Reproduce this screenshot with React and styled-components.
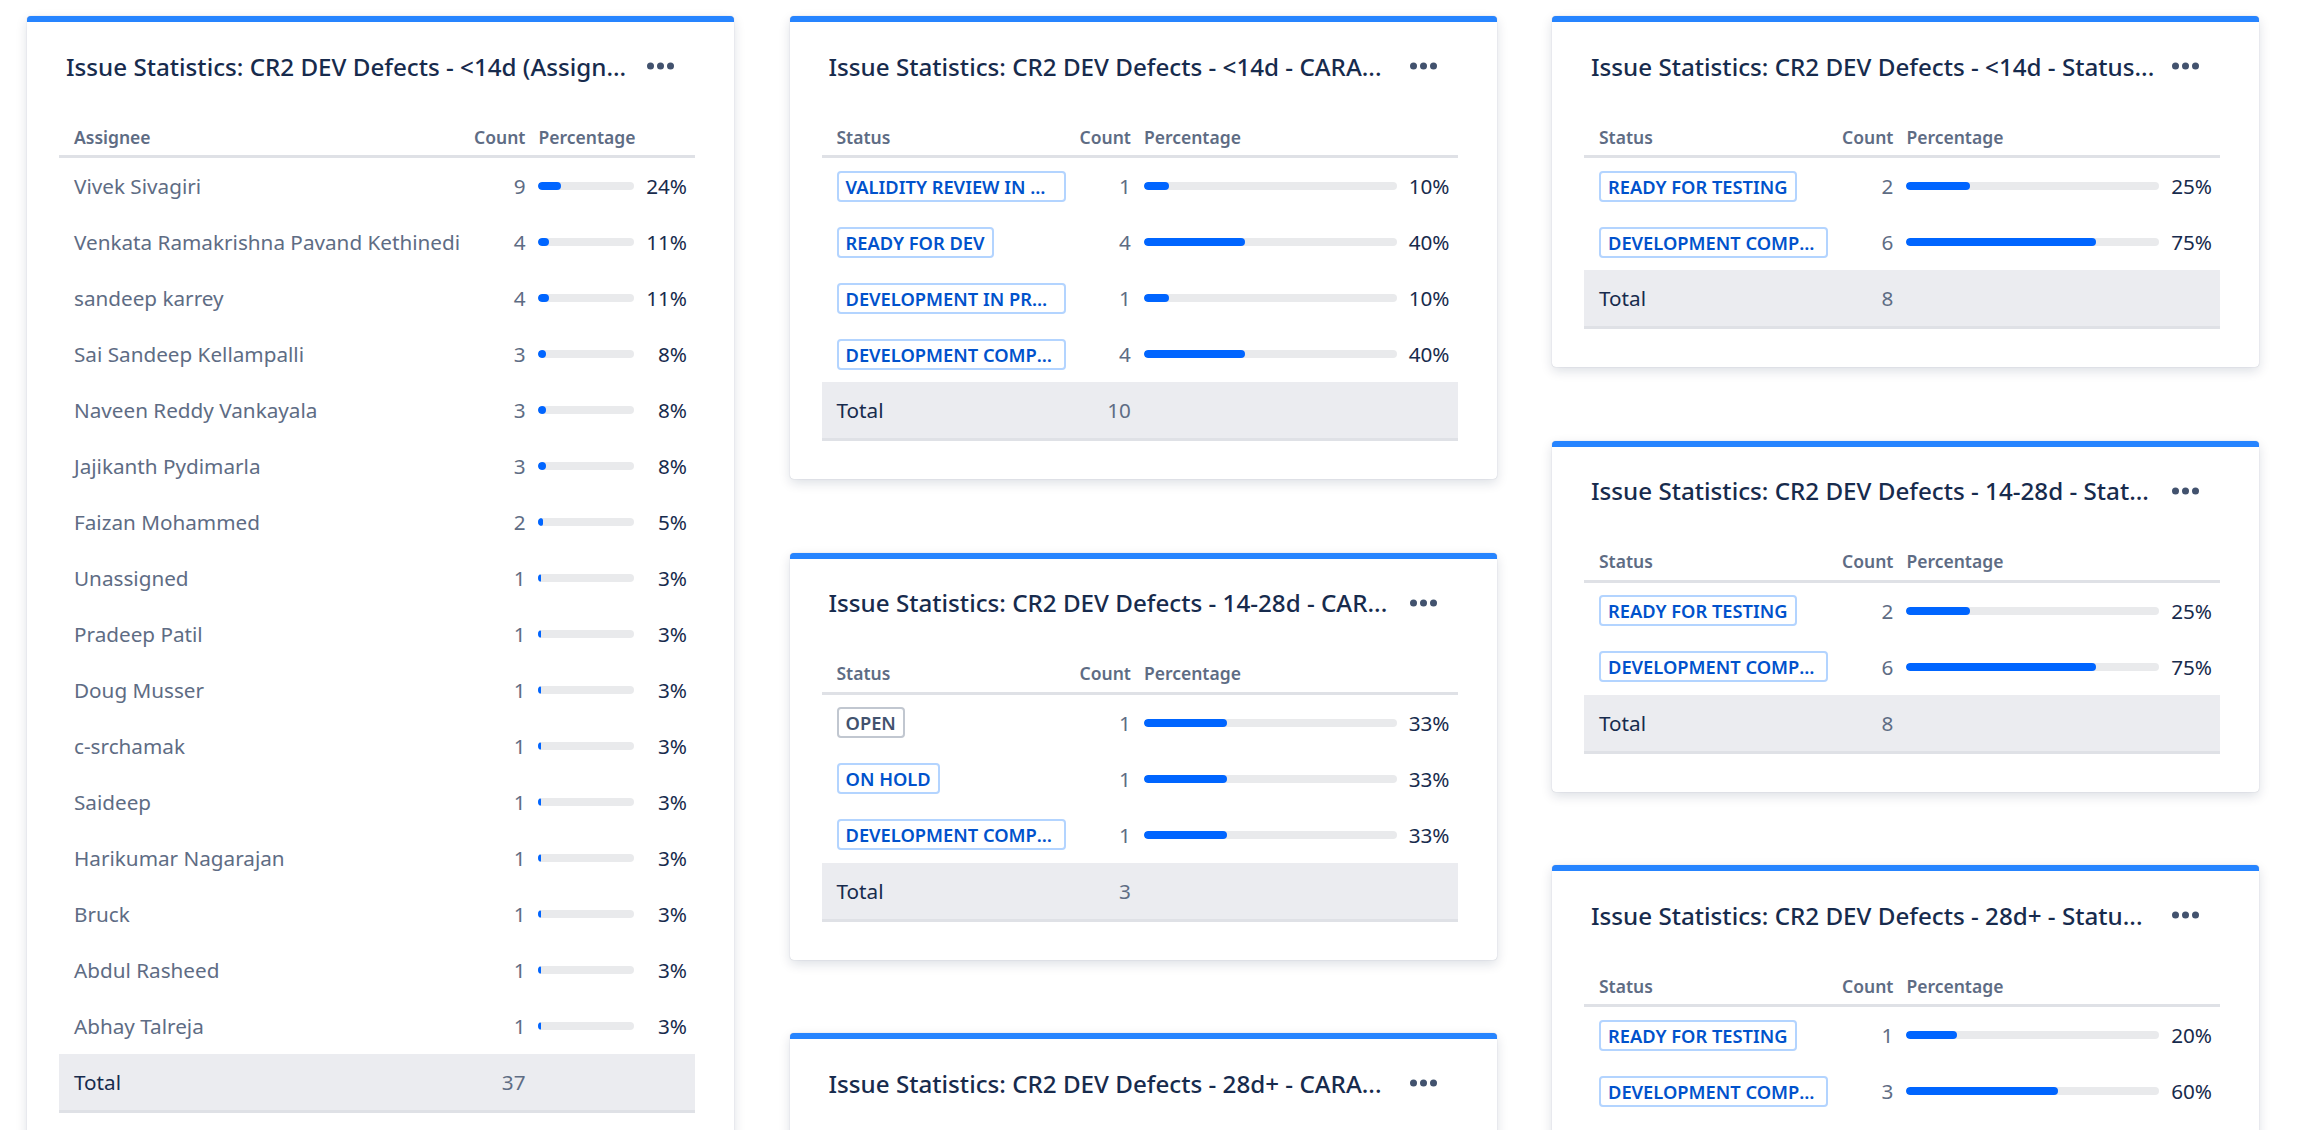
import React from 'react'
import styled, { createGlobalStyle } from 'styled-components'

const GlobalStyle = createGlobalStyle`
  html, body {
    margin: 0;
    padding: 0;
    background: #ffffff;
    overflow: hidden;
  }
  body {
    font-family: "Noto Sans", "Open Sans", sans-serif;
    color: #172b4d;
  }
`

const Board = styled.div`
  display: grid;
  grid-template-columns: repeat(3, 707px);
  column-gap: 55.5px;
  align-items: start;
  padding: 16px 53px 0 27px;
`
const Column = styled.div`
  display: flex;
  flex-direction: column;
  gap: 73.5px;
`
const Card = styled.section`
  background: #fff;
  border-top: 6px solid #2684ff;
  border-radius: 4px;
  box-shadow: 0 4px 12px rgba(9, 30, 66, 0.14), 0 0 1px rgba(9, 30, 66, 0.3);
  padding: 28px 39px 38px 32px;
`
const TitleRow = styled.div`
  display: flex;
  align-items: center;
  height: 32px;
  margin-bottom: 36px;
  padding-left: 7px;
`
const Title = styled.h2`
  flex: 1;
  min-width: 0;
  margin: 0;
  font-size: 24.2px;
  font-weight: 500;
  color: #172b4d;
  white-space: nowrap;
  overflow: hidden;
  text-overflow: ellipsis;
`
const MoreButton = styled.button`
  flex: none;
  display: flex;
  align-items: center;
  justify-content: center;
  width: 27px;
  height: 27px;
  margin: 0 21px 0 8px;
  padding: 0;
  border: 0;
  background: none;
  color: #42526e;
`
const Table = styled.table`
  width: 100%;
  border-collapse: collapse;
`
const Th = styled.th`
  height: 37px;
  padding: 0 ${({ $right }) => ($right ? '13px' : '8px')} 0 ${({ $pl }) => $pl};
  font-size: 17.5px;
  font-weight: 600;
  color: #5e6c84;
  text-align: ${({ $right }) => ($right ? 'right' : 'left')};
  white-space: nowrap;
  border-bottom: 3px solid #dfe1e6;
  vertical-align: middle;
`
const Row = styled.tr`
  background: ${({ $total }) => ($total ? '#ebecf0' : 'transparent')};
  border-bottom: ${({ $total }) => ($total ? '3px solid #dfe1e6' : '0')};
`
const NameCell = styled.td`
  height: 56px;
  padding: 0 6px 0 15px;
  font-size: 20.7px;
  color: ${({ $total }) => ($total ? '#172b4d' : '#5e6c84')};
  white-space: nowrap;
  vertical-align: middle;
`
const CountCell = styled.td`
  padding: 0 13px 0 8px;
  font-size: 20.7px;
  color: #5e6c84;
  text-align: right;
  white-space: nowrap;
`
const BarCell = styled.td`
  width: 100%;
  padding: 0;
`
const PctCell = styled.td`
  padding: 0 8px 0 12px;
  font-size: 20.7px;
  color: #172b4d;
  text-align: right;
  white-space: nowrap;
`
const Track = styled.div`
  height: 8px;
  border-radius: 4px;
  background: #e9eaec;
  overflow: hidden;
`
const Fill = styled.div`
  height: 100%;
  border-radius: 4px;
  background: #0065ff;
`
const Lozenge = styled.span`
  display: inline-block;
  box-sizing: border-box;
  max-width: 229px;
  height: 31px;
  padding: 0 7px;
  border: 2px solid ${({ $grey }) => ($grey ? '#c1c7d0' : '#b3d4ff')};
  border-radius: 4px;
  font-size: 18.3px;
  font-weight: 600;
  line-height: 27px;
  color: ${({ $grey }) => ($grey ? '#42526e' : '#0052cc')};
  text-transform: uppercase;
  white-space: nowrap;
  overflow: hidden;
  text-overflow: ellipsis;
  vertical-align: middle;
`

const Dots = () => (
  <svg width="27" height="8" viewBox="0 0 27 8" fill="currentColor">
    <circle cx="3.5" cy="4" r="3.5" />
    <circle cx="13.5" cy="4" r="3.5" />
    <circle cx="23.5" cy="4" r="3.5" />
  </svg>
)

const gadgets = [
  [
    {
      title: 'Issue Statistics: CR2 DEV Defects - <14d (Assign...',
      by: 'Assignee',
      rows: [
        ['Vivek Sivagiri', 9],
        ['Venkata Ramakrishna Pavand Kethinedi', 4],
        ['sandeep karrey', 4],
        ['Sai Sandeep Kellampalli', 3],
        ['Naveen Reddy Vankayala', 3],
        ['Jajikanth Pydimarla', 3],
        ['Faizan Mohammed', 2],
        ['Unassigned', 1],
        ['Pradeep Patil', 1],
        ['Doug Musser', 1],
        ['c-srchamak', 1],
        ['Saideep', 1],
        ['Harikumar Nagarajan', 1],
        ['Bruck', 1],
        ['Abdul Rasheed', 1],
        ['Abhay Talreja', 1],
      ],
    },
  ],
  [
    {
      title: 'Issue Statistics: CR2 DEV Defects - <14d - CARA...',
      by: 'Status',
      rows: [
        ['Validity Review In Progress', 1],
        ['Ready for Dev', 4],
        ['Development In Progress', 1],
        ['Development Complete', 4],
      ],
    },
    {
      title: 'Issue Statistics: CR2 DEV Defects - 14-28d - CAR...',
      by: 'Status',
      rows: [
        ['Open', 1, true],
        ['On Hold', 1],
        ['Development Complete', 1],
      ],
    },
    {
      title: 'Issue Statistics: CR2 DEV Defects - 28d+ - CARA...',
      by: 'Status',
      rows: [
        ['Ready for Testing', 1],
        ['Development Complete', 3],
        ['On Hold', 1],
      ],
    },
  ],
  [
    {
      title: 'Issue Statistics: CR2 DEV Defects - <14d - Status...',
      by: 'Status',
      rows: [
        ['Ready for Testing', 2],
        ['Development Complete', 6],
      ],
    },
    {
      title: 'Issue Statistics: CR2 DEV Defects - 14-28d - Stat...',
      by: 'Status',
      rows: [
        ['Ready for Testing', 2],
        ['Development Complete', 6],
      ],
    },
    {
      title: 'Issue Statistics: CR2 DEV Defects - 28d+ - Statu...',
      by: 'Status',
      rows: [
        ['Ready for Testing', 1],
        ['Development Complete', 3],
        ['On Hold', 1],
      ],
    },
  ],
]

function StatsGadget({ title, by, rows }) {
  const total = rows.reduce((sum, r) => sum + r[1], 0)
  return (
    <Card>
      <TitleRow>
        <Title>{title}</Title>
        <MoreButton aria-label="More"><Dots /></MoreButton>
      </TitleRow>
      <Table>
        <thead>
          <tr>
            <Th $pl="15px">{by}</Th>
            <Th $pl="8px" $right>Count</Th>
            <Th $pl="0" colSpan={2}>Percentage</Th>
          </tr>
        </thead>
        <tbody>
          {rows.map(([name, count, grey]) => {
            const pct = Math.round((count / total) * 100)
            return (
              <Row key={name}>
                <NameCell>
                  {by === 'Status' ? <Lozenge $grey={grey}>{name}</Lozenge> : name}
                </NameCell>
                <CountCell>{count}</CountCell>
                <BarCell>
                  <Track>
                    <Fill style={{ width: `${pct}%` }} />
                  </Track>
                </BarCell>
                <PctCell>{pct}%</PctCell>
              </Row>
            )
          })}
          <Row $total>
            <NameCell $total>Total</NameCell>
            <CountCell>{total}</CountCell>
            <BarCell />
            <PctCell />
          </Row>
        </tbody>
      </Table>
    </Card>
  )
}

export default function App() {
  return (
    <>
      <GlobalStyle />
      <Board>
        {gadgets.map((col, i) => (
          <Column key={i}>
            {col.map(g => <StatsGadget key={g.title} {...g} />)}
          </Column>
        ))}
      </Board>
    </>
  )
}
